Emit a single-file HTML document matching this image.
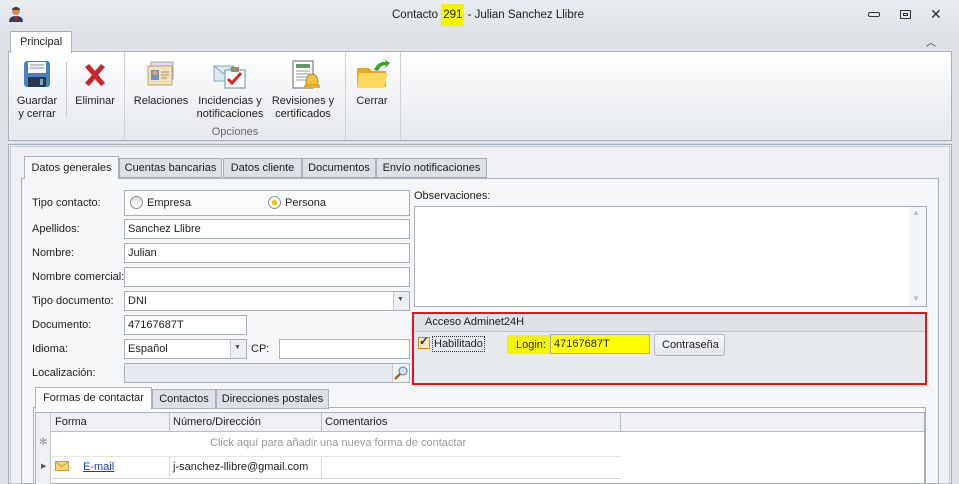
<!DOCTYPE html>
<html><head><meta charset="utf-8"><style>
*{box-sizing:border-box;margin:0;padding:0}
body{width:959px;height:484px;overflow:hidden;background:#dfe3e8;font-family:"Liberation Sans",sans-serif;font-size:11px;color:#1e1e1e;position:relative}
.a{position:absolute}
.t{position:absolute;white-space:nowrap}
.box{position:absolute;background:#fff;border:1px solid #a9b0b8}
.tab{position:absolute;background:#dde1e6;border:1px solid #aab1b9;text-align:center;line-height:18px}
.lbl{position:absolute;left:32px;white-space:nowrap}
.rb{position:absolute;text-align:center;line-height:13px;font-size:11px}
</style></head><body>
<div class="a" style="left:0;top:0;width:959px;height:31px;background:linear-gradient(#e9ecf0,#dfe3e8)"></div>
<svg class="a" style="left:8px;top:6px" width="16" height="17"><circle cx="8" cy="5" r="4" fill="#c88a5c"/><path d="M4 3 Q8 -1 12 3 L12 4 L4 4Z" fill="#5a3a22"/><path d="M1 16 Q1 10 8 10 Q15 10 15 16Z" fill="#2b3f6a"/><path d="M7 10 L9 10 L8.5 15 L7.5 15Z" fill="#c22"/></svg>
<div class="t" style="left:392px;top:9px;font-size:11.5px">Contacto <span style="background:#f5f500;padding:5px 2px">291</span> - Julian Sanchez Llibre</div>
<div class="t" style="left:868px;top:12px;width:12px;height:5px;border:1px solid #333;border-radius:2px"></div>
<div class="a" style="left:900px;top:10px;width:11px;height:9px;border:1px solid #333"></div><div class="a" style="left:903px;top:13px;width:5px;height:3px;border:1px solid #333"></div>
<div class="t" style="left:930px;top:6px;font-size:14px;color:#333">✕</div>
<div class="t" style="left:926px;top:34px;font-size:10px;color:#333">︿</div>
<div class="a" style="left:10px;top:31px;width:62px;height:22px;background:#fff;border:1px solid #aab1b9;border-bottom:none;border-radius:2px 2px 0 0;z-index:2"></div>
<div class="t" style="left:20px;top:36px;z-index:3">Principal</div>
<div class="a" style="left:8px;top:51px;width:944px;height:90px;border:1px solid #a9b0b8;background:linear-gradient(#fff,#eef0f3 60%,#e6e9ed)"></div>
<div class="a" style="left:124px;top:52px;width:1px;height:88px;background:#d0d4da"></div>
<div class="a" style="left:345px;top:52px;width:1px;height:88px;background:#d0d4da"></div>
<div class="a" style="left:400px;top:52px;width:1px;height:88px;background:#d0d4da"></div>
<div class="a" style="left:66px;top:62px;width:1px;height:55px;background:#c8ccd2"></div>
<svg class="a" style="left:23px;top:60px" width="28" height="28"><rect x="1" y="1" width="26" height="26" rx="3" fill="#4a7fc0"/><rect x="5" y="2" width="18" height="11" fill="#f4f6f8"/><path d="M7 5h14M7 8h14" stroke="#8a9aaa"/><rect x="5" y="17" width="18" height="10" fill="#283848"/><rect x="17" y="19" width="3" height="6" fill="#7aa0d0"/></svg>
<svg class="a" style="left:82px;top:62px" width="26" height="26"><path d="M3 5 L7 2 L13 9 L19 2 L23 5 L16 13 L23 21 L19 24 L13 17 L7 24 L3 21 L10 13Z" fill="#c8262a"/></svg>
<svg class="a" style="left:145px;top:60px" width="32" height="30"><rect x="6" y="2" width="22" height="17" fill="#e8d8ec" stroke="#aaa"/><rect x="3" y="6" width="24" height="19" fill="#f0e3b8" stroke="#b8a070"/><rect x="6" y="10" width="8" height="10" fill="#6a90c8"/><circle cx="10" cy="13" r="2.5" fill="#d9a070"/><path d="M16 12h8M16 15h8M16 18h6" stroke="#a89060"/></svg>
<svg class="a" style="left:213px;top:58px" width="34" height="32"><path d="M1 8h20v15H1z" fill="#dde8f4" stroke="#8aa"/><path d="M1 8l10 8 10-8" fill="none" stroke="#8aa"/><rect x="12" y="12" width="20" height="18" fill="#fff" stroke="#6a8ab0"/><rect x="18" y="9" width="8" height="5" fill="#9b8a70"/><path d="M15 21l4 4 9-10" stroke="#d22" stroke-width="3" fill="none"/></svg>
<svg class="a" style="left:290px;top:60px" width="32" height="30"><rect x="3" y="1" width="20" height="27" fill="#fff" stroke="#666"/><rect x="6" y="4" width="14" height="4" fill="#5a9a6a"/><path d="M6 11h14M6 14h14M6 17h14M6 20h10" stroke="#999"/><path d="M16 25 Q16 14 22 14 Q28 14 28 25Z" fill="#f2c23a" stroke="#b08a20"/><rect x="14" y="25" width="16" height="3" fill="#e0b030"/></svg>
<svg class="a" style="left:356px;top:58px" width="34" height="32"><path d="M1 10h12l3 3h14v16H1z" fill="#e8a820"/><path d="M3 15h29l-4 15H1z" fill="#fcd860"/><path d="M18 12 Q22 3 30 4 L28 1 L34 5 L29 10 L30 7 Q24 7 22 13Z" fill="#3aa02a"/></svg>
<div class="rb" style="left:12px;top:95px;width:50px">Guardar<br>y cerrar</div>
<div class="rb" style="left:70px;top:95px;width:50px">Eliminar</div>
<div class="rb" style="left:130px;top:95px;width:62px">Relaciones</div>
<div class="rb" style="left:193px;top:95px;width:74px">Incidencias y<br>notificaciones</div>
<div class="rb" style="left:268px;top:95px;width:70px">Revisiones y<br>certificados</div>
<div class="rb" style="left:348px;top:95px;width:48px">Cerrar</div>
<div class="rb" style="left:205px;top:126px;width:60px;color:#666">Opciones</div>
<div class="a" style="left:8px;top:144px;width:944px;height:340px;border:1px solid #a9b0b8;background:#e6e9ed"></div>
<div class="a" style="left:10px;top:146px;width:940px;height:338px;border:1px solid #c3c8ce;background:#eef0f3"></div>
<div class="a" style="left:21px;top:178px;width:918px;height:306px;border:1px solid #a9b0b8;background:#f5f6f8"></div>
<div class="tab" style="left:24px;top:156px;width:95px;height:23px;background:#f5f6f8;border-bottom:none;z-index:2;line-height:22px">Datos generales</div>
<div class="tab" style="left:119px;top:158px;width:103px;height:20px">Cuentas bancarias</div>
<div class="tab" style="left:223px;top:158px;width:79px;height:20px">Datos cliente</div>
<div class="tab" style="left:302px;top:158px;width:74px;height:20px">Documentos</div>
<div class="tab" style="left:376px;top:158px;width:111px;height:20px">Envío notificaciones</div>

<div class="lbl" style="top:197px">Tipo contacto:</div>
<div class="box" style="left:124px;top:190px;width:286px;height:26px;background:#fbfbfc"></div>
<div class="a" style="left:130px;top:196px;width:13px;height:13px;border-radius:50%;border:1px solid #8a9098;background:linear-gradient(#ddd,#fff)"></div>
<div class="t" style="left:147px;top:197px">Empresa</div>
<div class="a" style="left:268px;top:196px;width:13px;height:13px;border-radius:50%;border:1px solid #8a9098;background:radial-gradient(#f5c000 30%,#fff 40%)"></div>
<div class="t" style="left:285px;top:197px">Persona</div>

<div class="lbl" style="top:223px">Apellidos:</div>
<div class="box" style="left:124px;top:219px;width:286px;height:20px"></div><div class="t" style="left:128px;top:223px">Sanchez Llibre</div>
<div class="lbl" style="top:247px">Nombre:</div>
<div class="box" style="left:124px;top:243px;width:286px;height:20px"></div><div class="t" style="left:128px;top:247px">Julian</div>
<div class="lbl" style="top:271px">Nombre comercial:</div>
<div class="box" style="left:124px;top:267px;width:286px;height:20px"></div>
<div class="lbl" style="top:295px">Tipo documento:</div>
<div class="box" style="left:124px;top:291px;width:286px;height:20px"></div><div class="t" style="left:128px;top:295px">DNI</div>
<div class="a" style="left:393px;top:292px;width:16px;height:18px;background:#eceef1;border-left:1px solid #c8ccd2"></div><div class="t" style="left:397px;top:296px;font-size:7px;color:#555">▼</div>
<div class="lbl" style="top:319px">Documento:</div>
<div class="box" style="left:124px;top:315px;width:123px;height:20px"></div><div class="t" style="left:128px;top:319px">47167687T</div>
<div class="lbl" style="top:343px">Idioma:</div>
<div class="box" style="left:124px;top:339px;width:123px;height:20px"></div><div class="t" style="left:128px;top:343px">Español</div>
<div class="a" style="left:230px;top:340px;width:16px;height:18px;background:#eceef1;border-left:1px solid #c8ccd2"></div><div class="t" style="left:234px;top:344px;font-size:7px;color:#555">▼</div>
<div class="t" style="left:251px;top:343px">CP:</div>
<div class="box" style="left:279px;top:339px;width:131px;height:20px"></div>
<div class="lbl" style="top:367px">Localización:</div>
<div class="box" style="left:124px;top:363px;width:286px;height:20px;background:#e6e9ed"></div>
<div class="a" style="left:392px;top:364px;width:17px;height:18px;background:#f0f2f4;border-left:1px solid #c8ccd2"></div>
<svg class="a" style="left:394px;top:366px" width="14" height="14"><circle cx="9" cy="5" r="4" fill="#cfe4f6" stroke="#5a7a9a"/><path d="M6 8L1 13" stroke="#a06030" stroke-width="2.5"/></svg>

<div class="t" style="left:414px;top:190px">Observaciones:</div>
<div class="box" style="left:414px;top:206px;width:513px;height:101px"></div>
<div class="a" style="left:909px;top:207px;width:17px;height:99px;background:#f3f4f6"></div>
<div class="t" style="left:912px;top:208px;font-size:8px;color:#bbb">▲</div><div class="t" style="left:912px;top:294px;font-size:8px;color:#bbb">▼</div>

<div class="a" style="left:412px;top:312px;width:515px;height:73px;border:2px solid #e8141c;background:#e6e9ee"></div>
<div class="a" style="left:414px;top:314px;width:511px;height:18px;background:#dfe3e8;border-bottom:1px solid #c3c8ce"></div>
<div class="t" style="left:425px;top:316px">Acceso Adminet24H</div>
<div class="a" style="left:418px;top:337px;width:12px;height:12px;border:1px solid #d08a30;background:#f8e8c8"></div>
<div class="t" style="left:419px;top:334px;font-size:12px;font-weight:bold;color:#333">✓</div>
<div class="t" style="left:432px;top:336px;border:1px dotted #333;padding:0 1px;line-height:14px">Habilitado</div>
<div class="a" style="left:507px;top:335px;width:143px;height:19px;background:#f5f500"></div>
<div class="t" style="left:516px;top:339px">Login:</div>
<div class="a" style="left:550px;top:334px;width:100px;height:20px;border:1px solid #aab;background:#ffff00"></div>
<div class="t" style="left:554px;top:338px">47167687T</div>
<div class="a" style="left:654px;top:334px;width:71px;height:22px;border:1px solid #b4b9c0;border-radius:3px;background:linear-gradient(#f8f9fa,#e4e7eb)"></div>
<div class="t" style="left:662px;top:339px">Contraseña</div>

<div class="a" style="left:33px;top:407px;width:893px;height:77px;border:1px solid #a9b0b8;background:#fff"></div>
<div class="tab" style="left:35px;top:387px;width:117px;height:22px;background:#fff;border-bottom:none;z-index:2;line-height:21px">Formas de contactar</div>
<div class="tab" style="left:152px;top:389px;width:64px;height:20px">Contactos</div>
<div class="tab" style="left:216px;top:389px;width:113px;height:20px">Direcciones postales</div>
<div class="a" style="left:35px;top:412px;width:890px;height:72px;border:1px solid #a9b0b8;background:#fff"></div>
<div class="a" style="left:36px;top:413px;width:888px;height:19px;background:#eef0f3;border-bottom:1px solid #b8bec6"></div>
<div class="a" style="left:36px;top:413px;width:15px;height:71px;background:#eef0f3;border-right:1px solid #c8ccd2"></div>
<div class="a" style="left:169px;top:413px;width:1px;height:19px;background:#b8bec6"></div>
<div class="a" style="left:321px;top:413px;width:1px;height:19px;background:#b8bec6"></div>
<div class="a" style="left:620px;top:413px;width:1px;height:19px;background:#b8bec6"></div>
<div class="t" style="left:55px;top:416px">Forma</div>
<div class="t" style="left:173px;top:416px">Número/Dirección</div>
<div class="t" style="left:325px;top:416px">Comentarios</div>
<div class="t" style="left:39px;top:437px;font-size:10px;color:#999">✻</div>
<div class="t" style="left:210px;top:437px;color:#999">Click aquí para añadir una nueva forma de contactar</div>
<div class="a" style="left:52px;top:456px;width:569px;height:1px;background:#e6e6e6"></div>
<div class="a" style="left:52px;top:478px;width:569px;height:1px;background:#d8d8d8"></div>
<div class="a" style="left:169px;top:457px;width:1px;height:21px;background:#d8d8d8"></div>
<div class="a" style="left:321px;top:457px;width:1px;height:21px;background:#d8d8d8"></div>
<div class="t" style="left:41px;top:462px;font-size:7px;color:#555">▶</div>
<svg class="a" style="left:55px;top:461px" width="14" height="10"><rect x=".5" y=".5" width="13" height="9" fill="#f6d878" stroke="#c8a040"/><path d="M.5 .5l6.5 5 6.5-5" fill="none" stroke="#c8a040"/></svg>
<div class="t" style="left:83px;top:461px;color:#1a3cc8;text-decoration:underline">E-mail</div>
<div class="t" style="left:173px;top:461px">j-sanchez-llibre@gmail.com</div>
</body></html>
